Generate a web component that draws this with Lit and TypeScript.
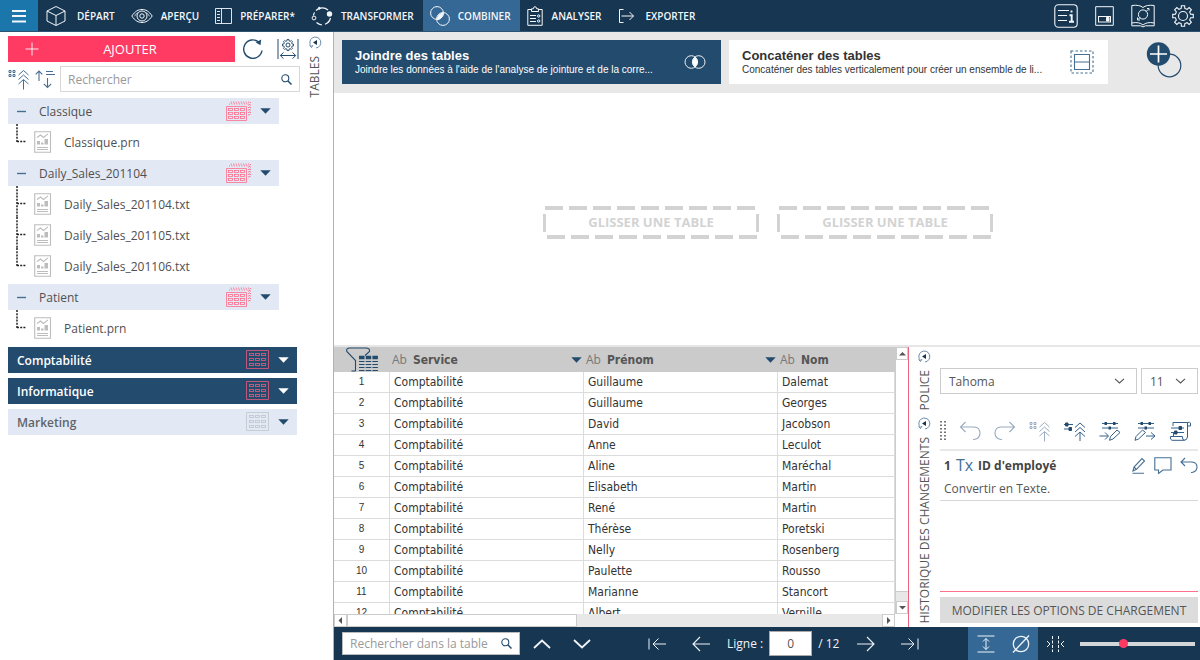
import { LitElement, html, css, svg } from "lit";
import { customElement, state } from "lit/decorators.js";
import { classMap } from "lit/directives/class-map.js";

/** Outline of a cog with n teeth around (c, c). */
function cog(c: number, outer: number, inner: number, n: number): string {
  const points: string[] = [];
  const step = (Math.PI * 2) / n;
  const at = (r: number, a: number) =>
    `${(c + r * Math.cos(a)).toFixed(2)} ${(c + r * Math.sin(a)).toFixed(2)}`;
  for (let i = 0; i < n; i++) {
    const a = i * step - Math.PI / 2;
    points.push(at(inner, a - step * 0.3), at(outer, a - step * 0.2), at(outer, a + step * 0.2), at(inner, a + step * 0.3));
  }
  return `M${points.join("L")}Z`;
}

const icon = (w: number, h: number, body: unknown, width = 1) => html`<svg
  class="icon" width=${w} height=${h} viewBox="0 0 ${w} ${h}" fill="none"
  stroke="currentColor" stroke-width=${width} aria-hidden="true">${body}</svg>`;

const icons = {
  menu: () => icon(14, 14, svg`<path d="M0 2h14M0 7h14M0 12.500h14"/>`, 1.8),
  cube: () => icon(24, 22, svg`<path d="M11 1.500L20 6V16L11 20.500L2 16V6ZM2 6L11 10.500L20 6M11 10.500V20.500"/>`),
  eye: () => icon(22, 16, svg`<path d="M.8 8C4 3.300 7.300 1.500 11 1.500S18 3.300 21.200 8C18 12.700 14.700 14.500 11 14.500S4 12.700 .8 8Z"/><circle cx="11" cy="8" r="5"/><circle cx="11" cy="8" r="2.200"/><path d="M3.500 8.300Q5 5.500 7 4.500M18.500 8.300Q17 5.500 15 4.500" stroke-width=".7"/>`),
  prepare: () => icon(17, 16, svg`<path d="M.5 .5H16.500V15.500H.5ZM6.500 .5V15.500M2 3.500H5M2 6.500H5M2 9.500H5M2 12.500H5" stroke-width=".9"/>`),
  transform: () => icon(22, 20, svg`<path d="M5 4.500A9 9 0 0 1 17 4M19.500 12A9 9 0 0 1 14 18.300M11 19A9 9 0 0 1 5.500 16.500M2.400 9.500A8 8 0 0 1 3.600 6.500" stroke-width="1.200"/><circle cx="18.500" cy="8" r="2.700" fill="currentColor" stroke="none"/><circle cx="3" cy="12" r="1.900"/><circle cx="8.300" cy="2.300" r="1" fill="currentColor"/>`),
  combine: () => icon(20, 20, svg`<path d="M7.400 13.500A6.400 6.400 0 0 1 13.200 7A6.400 6.400 0 0 1 7.400 13.500Z" fill="currentColor"/><circle cx="7" cy="7" r="6.400"/><circle cx="13" cy="13" r="6.400"/>`),
  analyse: () => icon(17, 20, svg`<path d="M4.500 3.500H.8V19.300H15.200V3.500H11.500M4.500 5.500V2.800H6.300Q6.500 .7 8 .7T9.700 2.800H11.500V5.500ZM3 9.500H9M3 12.500H9M3 15.500H9"/><circle cx="11.700" cy="10" r="1.200"/><circle cx="11.700" cy="15" r="1.200"/>`),
  exporter: () => icon(20, 16, svg`<path d="M6.500 1.500H2.500V14.500H6.500M4.500 8H16.500M12.500 4L16.500 8L12.500 12"/>`),
  info: () => icon(24, 24, svg`<rect x=".8" y=".8" width="22.400" height="22.400" rx="3.500"/><path d="M4 6.500H15M4 11.500H13M4 16.500H13"/><path d="M17.500 6.500V8.500M15.500 11.200H17.700V17.500M15 17.700H20" stroke-width="1.900"/>`, 1.1),
  windowed: () => icon(19, 20, svg`<path d="M.7 .7H18.300V19.300H.7Z"/><rect x="3.500" y="10.500" width="12" height="5.500"/><path d="M11.500 11.500H14V15H11.500Z" fill="currentColor"/>`),
  book: () => icon(24, 24, svg`<path d="M12 3.500Q8.500 .5 .8 1.500V19Q8 17.500 12 21Q16 17.500 23.200 19V1.500Q15.500 .5 12 3.500M.8 19V21.800H9.500Q12 24 14.500 21.800H23.200V19"/><circle cx="12" cy="10.500" r="4.600"/><path d="M7 15.500L9 13.500M17 5.500L15 7.500M16 4.500H18V6.500M6.500 13.500V16H9"/>`),
  gear: () => icon(22, 22, svg`<path d=${cog(11, 10.400, 7.800, 8)}/><circle cx="11" cy="11" r="4.500"/>`, 1.1),
  plus: () => icon(14, 14, svg`<path d="M7 .5V13.500M.5 7H13.500"/>`, 0.9),
  refresh: () => icon(22, 22, svg`<path d="M17 4.200A9.200 9.200 0 1 0 20 12.500" stroke-width="1.400"/><path d="M13.800 4.500L19.200 1.500L18.500 7.200Z" fill="currentColor" stroke="none"/>`),
  fit: () => icon(22, 22, svg`<path d="M1 1V21M21 1V21M3.500 17.500H18.500M6.500 14.500L3.300 17.500L6.500 20.700M15.500 14.500L18.700 17.500L15.500 20.700"/><g transform="translate(5 1)"><path d=${cog(6, 5.600, 4.300, 8)}/><circle cx="6" cy="6" r="2"/></g>`),
  collapse: () => icon(22, 22, svg`<path d="M1 2.500H3V4.500H1ZM5 2.500H7V4.500H5ZM1 6.500H3V8.500H1ZM5 6.500H7V8.500H5ZM10.500 7L15.500 2.500L20.500 7M10.500 11.500L15.500 7L20.500 11.500M10.500 16L15.500 11.500L20.500 16M15.500 12V21.500"/>`),
  order: () => icon(20, 20, svg`<path d="M4 2V12M.7 5.300L4 2L7.300 5.300M12.500 9V18.500M8.800 14.800L12.500 18.500L16.200 14.800M11 2.500H18M11 5.500H20"/>`, 1.1),
  search: () => icon(11, 11, svg`<circle cx="4.300" cy="4.300" r="3.500"/><path d="M7 7L10.500 10.500" stroke-width="1.500"/>`, 1.1),
  dock: () => icon(13, 13, svg`<path d="M2.500 10.500A5.500 5.500 0 1 1 7 12" stroke-width=".8"/><path d="M4 6.500L8 4V9Z" fill="#173651" stroke="none"/><path d="M.5 9.500L2.500 11.500L4 9" stroke-width=".8"/>`),
  triangle: () => icon(11, 6, svg`<path d="M.3 .3H10.700L5.500 5.800Z" fill="currentColor" stroke="none"/>`),
  minus: () => icon(9, 3, svg`<path d="M0 1.500H9"/>`, 1.4),
  tableStack: () => icon(25, 20, svg`<path d="M4.500 1H24.500V14M3 3H22.500V16M23.500 3V14M5 2H24" stroke-dasharray="1 1.500" stroke-width=".9"/><path d="M.5 5.500H20.500V19.500H.5Z"/>${[7.500, 11.500, 15.500].map((y) => [2.500, 8.500, 14.500].map((x) => svg`<rect x=${x} y=${y} width="4" height="2"/>`))}`, 0.8),
  table: () => icon(23, 20, svg`<path d="M.5 .5H22.500V18.500H.5Z"/>${[3.500, 8.500, 13.500].map((y) => [3.500, 9.500, 15.500].map((x) => svg`<rect x=${x} y=${y} width="4" height="2"/>`))}`, 0.9),
  file: () => icon(18, 22, svg`<path d="M.7 .7H16.500V21.300H.7Z"/><path d="M3 6.500L6.500 4L9.500 6.500L14 2.800M3 16.500H14M3 18.500H14"/><path d="M3 10H6V13.500H3ZM7 11.500H9.500V13.500H7ZM10.500 8H14V13.500H10.500Z" fill="currentColor" stroke="none"/>`, 1.1),
  branch: (last: boolean) => icon(10, 31, svg`<path d="M1 0V${last ? 18 : 31}M1 17.500H10" stroke-dasharray="2 1.200" stroke-width="1.500"/>`),
  join: () => icon(24, 14, svg`<path d="M12 2.300A6 6 0 0 1 12 11.700A6 6 0 0 1 12 2.300Z" fill="currentColor"/><circle cx="8.300" cy="7" r="6.300"/><circle cx="15.700" cy="7" r="6.300"/>`, 0.9),
  append: () => icon(24, 24, svg`<path d="M1 1H23V23H1Z" stroke-dasharray="2.500 2"/><path d="M4.500 4.500H19.500V19.500H4.500ZM4.500 12H19.500"/>`, 1.1),
  addJoin: () => icon(36, 36, svg`<circle cx="23.500" cy="23.500" r="11.300" stroke-width="1.200"/><circle cx="12.500" cy="12" r="11.700" fill="currentColor" stroke="none"/><path d="M12.500 3.500V20.500M4 12H21" stroke="#fff" stroke-width="1.700"/>`),
  filter: () => icon(33, 25, svg`<path d="M9.500 24V13.500L.8 4.500Q0 1 4 1H20Q24 1 23.500 4.500L19 8.500M9.500 24L5.500 24" stroke-width="1.100"/><path d="M13 10.500H32" stroke-width="3.500" stroke-dasharray="5.500 1.200"/><path d="M13 14.500H32M13 17.500H32M13 20.500H32M13 23.500H32" stroke-width="1.100" stroke-dasharray="5.500 1.200"/>`),
  chevron: () => icon(11, 6, svg`<path d="M1 .8L5.500 5L10 .8"/>`, 1.1),
  grip: () => icon(6, 20, svg`<path d="M1 0V20M5 0V20" stroke-width="1.500" stroke-dasharray="1.500 2"/>`),
  undo: () => icon(22, 20, svg`<path d="M6.500 1L1.500 6L6.500 11M1.500 6H15Q21 6.500 21 12T15 18.500H14"/>`, 1.1),
  redo: () => icon(22, 20, svg`<path d="M15.500 1L20.500 6L15.500 11M20.500 6H7Q1 6.500 1 12T7 18.500H8"/>`, 1.1),
  promote: () => icon(22, 20, svg`<path d="M0 3.500H9M0 8H8M11 6.500L16 2L21 6.500M11 11L16 6.500L21 11M11 15.500L16 11L21 15.500M16 11.500V20.500"/><path d="M1.500 2H4V5H1.500ZM5 6.500H7.500V9.500H5Z" fill="#234b6e" stroke="#234b6e"/>`),
  importStep: () => icon(22, 20, svg`<path d="M3 2.500H19M3 7H19M.5 15H9M6 11.500L9.500 15L6 18.500M10.500 19.300L11.500 15.500L18 9L21 11.500L14 18Z"/><path d="M5.500 1H8V4H5.500ZM14 1H16.500V4H14ZM9.500 5.500H12V8.500H9.500Z" fill="#234b6e" stroke="none"/>`),
  exportStep: () => icon(22, 20, svg`<path d="M4 2.500H20M4 7H20M12 15H21M17 11.500L21 15L17 18.500M1 19.300L2 15.500L8.500 9L11.500 11.500L4.500 18Z"/><path d="M6.500 1H9V4H6.500ZM14.500 1H17V4H14.500ZM10.500 5.500H13V8.500H10.500Z" fill="#234b6e" stroke="none"/>`),
  script: () => icon(22, 20, svg`<path d="M4 5V1.500H18.500V16Q18 19.300 15 19.300H3Q1 19 1.500 15.500H13.500Q13 19 15.500 19.300M18.500 5H21.500V2Q21 .8 18.500 1.500M2 7H15M2 11.500H15M4.500 12V15"/><path d="M10 5.500H12.500V8.500H10ZM5.500 10H8V13H5.500Z" fill="#234b6e" stroke="#234b6e"/>`),
  edit: () => icon(15, 17, svg`<path d="M2 14L3 10L11 1.500L13.500 4L5.500 12.300ZM3 10L5.500 12.300M1.500 16.300H13"/>`, 1.1),
  comment: () => icon(18, 17, svg`<path d="M.8 .8H17V13H9L4.500 16.500V13H.8Z"/>`, 1.1),
  revert: () => icon(18, 17, svg`<path d="M5 1L1 5L5 9M1 5H12Q17 5.500 17 10T12 15.500H11"/>`, 1.1),
  up: () => icon(18, 10, svg`<path d="M1 9L9 1.500L17 9"/>`, 1.8),
  down: () => icon(18, 10, svg`<path d="M1 1L9 8.500L17 1"/>`, 1.8),
  first: () => icon(18, 14, svg`<path d="M1 1.500V12.500M18 7H5M10.500 1.500L5 7L10.500 12.500"/>`),
  previous: () => icon(18, 16, svg`<path d="M18 8H1M8 1L1 8L8 15"/>`, 1.1),
  next: () => icon(18, 16, svg`<path d="M0 8H17M10 1L17 8L10 15"/>`, 1.1),
  last: () => icon(18, 14, svg`<path d="M17 1.500V12.500M0 7H13M7.500 1.500L13 7L7.500 12.500"/>`),
  rowHeight: () => icon(18, 18, svg`<path d="M.5 1H17.500M.5 17H17.500M9 3.500V14.500M6 6.500L9 3.500L12 6.500M6 11.500L9 14.500L12 11.500"/>`),
  empty: () => icon(18, 18, svg`<circle cx="9" cy="9" r="7.700"/><path d="M1 17.500L17 .5"/>`, 1.3),
  squeeze: () => icon(19, 16, svg`<path d="M6.500 0V16M12.500 0V16" stroke-dasharray="3 1.500"/><path d="M1 5L4 8L1 11M18 5L15 8L18 11"/>`),
};

const sections = [
  { name: "DÉPART", icon: icons.cube },
  { name: "APERÇU", icon: icons.eye },
  { name: "PRÉPARER*", icon: icons.prepare },
  { name: "TRANSFORMER", icon: icons.transform },
  { name: "COMBINER", icon: icons.combine },
  { name: "ANALYSER", icon: icons.analyse },
  { name: "EXPORTER", icon: icons.exporter },
];

const sources = [
  { name: "Classique", files: ["Classique.prn"] },
  { name: "Daily_Sales_201104", files: ["Daily_Sales_201104.txt", "Daily_Sales_201105.txt", "Daily_Sales_201106.txt"] },
  { name: "Patient", files: ["Patient.prn"] },
];

const tables = [
  { name: "Comptabilité", loaded: true },
  { name: "Informatique", loaded: true },
  { name: "Marketing", loaded: false },
];

const rows = [
  ["Guillaume", "Dalemat"], ["Guillaume", "Georges"], ["David", "Jacobson"], ["Anne", "Leculot"],
  ["Aline", "Maréchal"], ["Elisabeth", "Martin"], ["René", "Martin"], ["Thérèse", "Poretski"],
  ["Nelly", "Rosenberg"], ["Paulette", "Rousso"], ["Marianne", "Stancort"], ["Albert", "Vernille"],
];

const base = css`
  :host { display: block; box-sizing: border-box; }
  * { box-sizing: border-box; }
  button, input, select { font: inherit; color: inherit; margin: 0; }
  button { border: 0; padding: 0; background: none; display: flex; align-items: center; justify-content: center; cursor: pointer; }
  h2, p, ul { margin: 0; padding: 0; list-style: none; }
  .icon { display: block; flex: none; }
`;

@customElement("top-bar")
export class TopBar extends LitElement {
  @state() private active = "COMBINER";

  static styles = [base, css`
    .bar { display: flex; height: 32px; background: #173651; color: #f4f7fa; border-bottom: 1px solid #2c5372; }
    .burger { width: 38px; background: #1b76ac; }
    .nav { display: flex; flex: 1; }
    .section { gap: 8px; padding: 0 9px 0 7px; font-size: 10px; font-weight: 700; white-space: nowrap; }
    .section { font-weight: 600; }
    .active { background: #356895; }
    .tools { display: flex; align-items: center; gap: 17px; padding-right: 6px; }
  `];

  render() {
    return html`<header class="bar">
      <button class="burger" aria-label="Menu">${icons.menu()}</button>
      <nav class="nav">
        ${sections.map((s) => html`<button
          class=${classMap({ section: true, active: s.name === this.active })}
          @click=${() => (this.active = s.name)}>${s.icon()}${s.name}</button>`)}
      </nav>
      <div class="tools">
        <button aria-label="Informations">${icons.info()}</button>
        <button aria-label="Fenêtre">${icons.windowed()}</button>
        <button aria-label="Aide">${icons.book()}</button>
        <button aria-label="Paramètres">${icons.gear()}</button>
      </div>
    </header>`;
  }
}

@customElement("table-list")
export class TableList extends LitElement {
  static styles = [base, css`
    :host { display: flex; width: 334px; flex: none; border-right: 1px solid #fa8fa5; color: #505050; font-size: 12px; background: #fff; }
    .panel { width: 300px; padding: 4px 0 0 8px; }
    .actions { display: flex; align-items: center; gap: 7px; height: 26px; }
    .add { width: 227px; height: 26px; background: #ff3b64; color: #fff; font-size: 13px; justify-content: flex-start; padding-left: 17px; }
    .add-text { flex: 1; text-align: center; padding-right: 14px; }
    .actions .tool { width: 22px; color: #234b6e; }
    .actions .tool + .tool { margin-left: 6px; }
    .finder { display: flex; align-items: center; gap: 5px; margin-top: 4px; height: 26px; color: #466f93; }
    .field { display: flex; align-items: center; flex: 1; height: 26px; border: 1px solid #d8d8d8; padding: 0 7px; color: #234b6e; }
    .input { flex: 1; min-width: 0; border: 0; outline: 0; padding: 0; background: none; }
    .input::placeholder { color: #999; opacity: 1; }
    .tree { display: flex; flex-direction: column; gap: 5px; margin-top: 6px; width: 271px; font-weight: 500; }
    .group { display: flex; flex-direction: column; gap: 5px; }
    .row { display: flex; align-items: center; height: 26px; background: #e2e9f5; padding: 0 8px 0 9px; }
    .toggle { width: 22px; justify-content: flex-start; color: #466f93; }
    .name { flex: 1; }
    .badge { color: #ff6c8b; }
    .more { margin-left: 9px; color: #234b6e; }
    .files { display: flex; flex-direction: column; gap: 5px; }
    .file { display: flex; align-items: center; height: 26px; padding-left: 8px; }
    .branch { color: #222; height: 31px; margin-top: -5px; }
    .doc { color: #bdbdbd; margin: 0 12px 0 8px; }
    .tables { display: flex; flex-direction: column; gap: 5px; margin-top: 6px; width: 289px; font-weight: 600; }
    .loaded { background: #234b6e; color: #fff; }
    .loaded .badge { color: #d25a7c; }
    .loaded .more { color: #fff; }
    .idle .name { color: #606468; }
    .idle .badge { color: #c3c8d0; }
    .rail { flex: 1; display: flex; flex-direction: column; align-items: center; gap: 7px; padding: 4px 3px 0 0; color: #466f93; }
    .rail-title { writing-mode: vertical-rl; transform: rotate(180deg); color: #555; line-height: 16px; }
  `];

  render() {
    return html`
      <section class="panel">
        <div class="actions">
          <button class="add">${icons.plus()}<span class="add-text">AJOUTER</span></button>
          <button class="tool" aria-label="Actualiser">${icons.refresh()}</button>
          <button class="tool" aria-label="Ajuster">${icons.fit()}</button>
        </div>
        <div class="finder">
          <button aria-label="Tout réduire">${icons.collapse()}</button>
          <button aria-label="Trier">${icons.order()}</button>
          <label class="field"><input class="input" type="text" placeholder="Rechercher" aria-label="Rechercher" />${icons.search()}</label>
        </div>
        <ul class="tree">
          ${sources.map((g) => html`<li class="group">
            <div class="row">
              <button class="toggle" aria-label="Réduire">${icons.minus()}</button>
              <span class="name">${g.name}</span>
              <span class="badge">${icons.tableStack()}</span>
              <button class="more" aria-label="Options">${icons.triangle()}</button>
            </div>
            <ul class="files">
              ${g.files.map((f, i) => html`<li class="file">
                <span class="branch">${icons.branch(i === g.files.length - 1)}</span>
                <span class="doc">${icons.file()}</span>
                <span>${f}</span>
              </li>`)}
            </ul>
          </li>`)}
        </ul>
        <ul class="tables">
          ${tables.map((t) => html`<li class=${classMap({ row: true, loaded: t.loaded, idle: !t.loaded })}>
            <span class="name">${t.name}</span>
            <span class="badge">${icons.table()}</span>
            <button class="more" aria-label="Options">${icons.triangle()}</button>
          </li>`)}
        </ul>
      </section>
      <aside class="rail">
        <button aria-label="Ancrer">${icons.dock()}</button>
        <span class="rail-title">TABLES</span>
      </aside>`;
  }
}

@customElement("combine-area")
export class CombineArea extends LitElement {
  static styles = [base, css`
    :host { display: flex; flex-direction: column; flex: 1; min-height: 0; }
    .modes { display: flex; gap: 8px; height: 61px; padding: 8px 18px 8px 8px; background: #e8e8e8; }
    .mode { flex: 1; min-width: 0; height: 44px; padding: 0 14px 0 13px; gap: 12px; background: #fff; color: #333; text-align: left; font-family: "Liberation Sans", Arial, sans-serif; }
    .selected { background: #234b6e; color: #fff; }
    .texts { flex: 1; min-width: 0; display: flex; flex-direction: column; }
    .title { font-size: 13px; line-height: 15px; font-weight: 700; }
    .hint { font-size: 10px; line-height: 14px; white-space: nowrap; overflow: hidden; }
    .mode-icon { color: #466f93; }
    .selected .mode-icon { color: #fff; }
    .add { width: 36px; margin-left: 30px; height: 40px; color: #234b6e; }
    .canvas { flex: 1; display: flex; align-items: center; justify-content: center; gap: 18px; padding: 6px 0 0 2px; background: #fff; border-bottom: 2px solid #e6e6e6; }
    .slot {
      width: 216px; height: 33px; display: flex; align-items: center; justify-content: center;
      color: #d3d3d3; font-size: 13px; font-weight: 700;
      background:
        repeating-linear-gradient(90deg, #d3d3d3 0 18px, transparent 18px 24px) 2px 0 / 212px 4px no-repeat,
        repeating-linear-gradient(90deg, #d3d3d3 0 18px, transparent 18px 24px) 4px 100% / 210px 4px no-repeat,
        linear-gradient(#d3d3d3, #d3d3d3) 0 8px / 3px 18px no-repeat,
        linear-gradient(#d3d3d3, #d3d3d3) 100% 8px / 3px 18px no-repeat;
    }
  `];

  render() {
    return html`
      <div class="modes">
        <button class="mode selected">
          <span class="texts"><span class="title">Joindre des tables</span>
          <span class="hint">Joindre les données à l'aide de l'analyse de jointure et de la corre...</span></span>
          <span class="mode-icon">${icons.join()}</span>
        </button>
        <button class="mode">
          <span class="texts"><span class="title">Concaténer des tables</span>
          <span class="hint">Concaténer des tables verticalement pour créer un ensemble de li...</span></span>
          <span class="mode-icon">${icons.append()}</span>
        </button>
        <button class="add" aria-label="Ajouter une jointure">${icons.addJoin()}</button>
      </div>
      <div class="canvas">
        <div class="slot">GLISSER UNE TABLE</div>
        <div class="slot">GLISSER UNE TABLE</div>
      </div>`;
  }
}

@customElement("data-grid")
export class DataGrid extends LitElement {
  static styles = [base, css`
    :host { display: grid; grid-template: minmax(0, 1fr) 13px / minmax(0, 1fr) 13px; flex: 1; min-width: 0; height: 280px; border-right: 1px solid #e9657f; background: #e8e8e8; overflow: hidden; }
    .view { overflow: hidden; background: #fff; }
    .grid { width: 100%; table-layout: fixed; border-collapse: separate; border-spacing: 0; color: #333; font-family: "DejaVu Sans Condensed", "Noto Sans", sans-serif; font-size: 12px; }
    .col-index { width: 56px; }
    .col-text { width: 194px; }
    .head { height: 25px; padding: 0; background: #cbcbcb; color: #555; text-align: left; }
    .head-row { display: flex; align-items: center; gap: 6px; padding: 0 2px; }
    .type { font-family: "Open Sans", sans-serif; font-weight: 400; color: #777; font-size: 12px; }
    .sort { margin-left: auto; color: #234b6e; }
    .filter { margin: 0 auto; color: #234b6e; }
    .cell { height: 21px; padding: 0 4px; line-height: 20px; border-bottom: 1px solid #dcdcdc; border-right: 1px solid #dcdcdc; }
    .index { font-family: "Liberation Sans", Arial, sans-serif; font-size: 10px; font-weight: 400; text-align: center; }
    .vbar, .hbar { display: flex; background: #e8e8e8; }
    .vbar { flex-direction: column; border-left: 1px solid #ccc; }
    .knob { flex: none; width: 13px; height: 13px; background: #fff; border: 1px solid #ccc; color: #555; }
    .vbar .knob { width: 12px; }
    .vthumb { flex: 1; margin-bottom: 9px; background: #fff; border-bottom: 1px solid #ccc; }
    .hthumb { width: 41%; background: #fff; border: 1px solid #ccc; }
    .fill { flex: 1; }
    .corner { background: #fff; }
  `];

  private arrow(d: string) {
    return icon(7, 7, svg`<path d=${d} fill="currentColor" stroke="none"/>`);
  }

  private heading(name: string, sort: boolean) {
    return html`<th class="head" scope="col"><div class="head-row">
      <span class="type">Ab</span><span>${name}</span>
      ${sort ? html`<button class="sort" aria-label="Trier">${icons.triangle()}</button>` : ""}
    </div></th>`;
  }

  render() {
    return html`
      <div class="view"><table class="grid">
        <colgroup><col class="col-index" /><col class="col-text" /><col class="col-text" /><col /></colgroup>
        <thead><tr>
          <th class="head"><button class="filter" aria-label="Filtrer">${icons.filter()}</button></th>
          ${this.heading("Service", true)}${this.heading("Prénom", true)}${this.heading("Nom", false)}
        </tr></thead>
        <tbody>${rows.map(([first, last], i) => html`<tr>
          <th class="cell index" scope="row">${i + 1}</th>
          <td class="cell">Comptabilité</td><td class="cell">${first}</td><td class="cell">${last}</td>
        </tr>`)}</tbody>
      </table></div>
      <div class="vbar">
        <button class="knob" aria-label="Monter">${this.arrow("M0 5.500L3.500 2L7 5.500Z")}</button>
        <div class="vthumb"></div>
        <button class="knob" aria-label="Descendre">${this.arrow("M0 2L3.500 5.500L7 2Z")}</button>
      </div>
      <div class="hbar">
        <button class="knob" aria-label="Gauche">${this.arrow("M5 0L1.500 3.500L5 7Z")}</button>
        <div class="hthumb"></div><div class="fill"></div>
        <button class="knob" aria-label="Droite">${this.arrow("M2 0L5.500 3.500L2 7Z")}</button>
      </div>
      <div class="corner"></div>`;
  }
}

@customElement("history-panel")
export class HistoryPanel extends LitElement {
  static styles = [base, css`
    :host { display: flex; width: 291px; flex: none; background: #fff; color: #555; font-size: 12px; }
    .rail { width: 31px; display: flex; flex-direction: column; align-items: center; padding-top: 3px; gap: 7px; color: #466f93; }
    .rail-title { writing-mode: vertical-rl; transform: rotate(180deg); color: #555; line-height: 16px; white-space: nowrap; }
    .body { flex: 1; min-width: 0; display: flex; flex-direction: column; padding: 21px 2px 4px 0; }
    .fonts { display: flex; gap: 4px; height: 26px; }
    .choice { display: grid; border: 1px solid #ccc; align-items: center; color: #555; }
    .family { flex: 1; }
    .size { width: 57px; }
    .select { grid-area: 1 / 1; appearance: none; width: 100%; height: 24px; border: 0; outline: 0; background: none; padding: 0 8px; }
    .mark { grid-area: 1 / 1; justify-self: end; margin-right: 11px; pointer-events: none; }
    .toolbar { display: flex; align-items: center; justify-content: space-between; margin-top: 26px; height: 22px; padding-right: 7px; color: #35608a; }
    .off { color: #98abc0; }
    .grip { color: #444; }
    .entry { margin-top: 7px; border-top: 2px solid #e8e8e8; border-bottom: 1px solid #d8d8d8; height: 52px; padding: 4px 0 0 4px; }
    .entry-head { display: flex; align-items: center; gap: 5px; height: 20px; font-weight: 700; color: #444; }
    .kind { font-size: 16px; font-weight: 400; color: #466f93; line-height: 20px; }
    .tools { display: flex; gap: 8px; margin-left: auto; color: #466f93; }
    .detail { line-height: 16px; margin-top: 6px; }
    .spacer { flex: 1; border-bottom: 1px solid #ff6f8c; }
    .modify { margin-top: 5px; height: 26px; background: #dcdcdc; white-space: nowrap; }
  `];

  render() {
    return html`
      <aside class="rail">
        <button aria-label="Ancrer">${icons.dock()}</button>
        <span class="rail-title">POLICE</span>
        <button aria-label="Ancrer">${icons.dock()}</button>
        <span class="rail-title">HISTORIQUE DES CHANGEMENTS</span>
      </aside>
      <section class="body">
        <div class="fonts">
          <div class="choice family"><select class="select" aria-label="Police"><option>Tahoma</option></select><span class="mark">${icons.chevron()}</span></div>
          <div class="choice size"><select class="select" aria-label="Taille"><option>11</option></select><span class="mark">${icons.chevron()}</span></div>
        </div>
        <div class="toolbar">
          <span class="grip">${icons.grip()}</span>
          <button class="off" aria-label="Annuler">${icons.undo()}</button>
          <button class="off" aria-label="Rétablir">${icons.redo()}</button>
          <button class="off" aria-label="Réduire">${icons.collapse()}</button>
          <button aria-label="Remonter">${icons.promote()}</button>
          <button aria-label="Importer les étapes">${icons.importStep()}</button>
          <button aria-label="Exporter les étapes">${icons.exportStep()}</button>
          <button aria-label="Script">${icons.script()}</button>
        </div>
        <div class="entry">
          <div class="entry-head"><span>1</span><span class="kind">Tx</span><span>ID d'employé</span>
            <div class="tools">
              <button aria-label="Modifier">${icons.edit()}</button>
              <button aria-label="Commenter">${icons.comment()}</button>
              <button aria-label="Annuler ce changement">${icons.revert()}</button>
            </div>
          </div>
          <p class="detail">Convertir en Texte.</p>
        </div>
        <div class="spacer"></div>
        <button class="modify">MODIFIER LES OPTIONS DE CHARGEMENT</button>
      </section>`;
  }
}

@customElement("status-bar")
export class StatusBar extends LitElement {
  static styles = [base, css`
    :host { display: block; flex: none; }
    .bar { display: flex; align-items: center; height: 33px; padding: 0 5px 0 8px; background: #173651; color: #f0f4f8; font-size: 12px; }
    .field { display: flex; align-items: center; width: 178px; height: 23px; margin-right: 2px; background: #fff; border: 1px solid #bbb; padding: 0 7px; color: #234b6e; }
    .input { flex: 1; min-width: 0; border: 0; outline: 0; padding: 0; background: none; }
    .input::placeholder { color: #999; opacity: 1; }
    .find { width: 40px; height: 33px; }
    .pager { display: flex; align-items: center; margin-left: 33px; }
    .step { width: 44px; height: 33px; }
    .line { display: flex; align-items: center; gap: 6px; padding: 0 5px 0 4px; white-space: nowrap; }
    .number { width: 43px; height: 25px; border: 1px solid #aaa; background: #fff; color: #555; text-align: center; padding: 0; }
    .toggles { display: flex; margin-left: auto; background: #356895; }
    .toggle { width: 35px; height: 33px; }
    .slider { width: 115px; height: 12px; margin: 0 0 0 7px; appearance: none; background: none; }
    .slider::-webkit-slider-runnable-track { height: 4px; background: #d3d7da; }
    .slider::-webkit-slider-thumb { appearance: none; width: 9px; height: 9px; margin-top: -3px; border-radius: 50%; background: #ff3b64; }
  `];

  render() {
    return html`<footer class="bar">
      <label class="field"><input class="input" type="text" placeholder="Rechercher dans la table" aria-label="Rechercher dans la table" />${icons.search()}</label>
      <button class="find" aria-label="Résultat précédent">${icons.up()}</button>
      <button class="find" aria-label="Résultat suivant">${icons.down()}</button>
      <div class="pager">
        <button class="step" aria-label="Première ligne">${icons.first()}</button>
        <button class="step" aria-label="Ligne précédente">${icons.previous()}</button>
        <label class="line">Ligne : <input class="number" type="text" value="0" /><span>/ 12</span></label>
        <button class="step" aria-label="Ligne suivante">${icons.next()}</button>
        <button class="step" aria-label="Dernière ligne">${icons.last()}</button>
      </div>
      <div class="toggles">
        <button class="toggle" aria-label="Hauteur des lignes">${icons.rowHeight()}</button>
        <button class="toggle" aria-label="Valeurs vides">${icons.empty()}</button>
      </div>
      <button class="toggle" aria-label="Ajuster les colonnes">${icons.squeeze()}</button>
      <input class="slider" type="range" min="0" max="100" value="37" aria-label="Zoom" />
    </footer>`;
  }
}

@customElement("app-root")
export class AppRoot extends LitElement {
  static styles = [base, css`
    :host { display: flex; flex-direction: column; height: 100vh; font-family: "Open Sans", "Noto Sans", sans-serif; overflow: hidden; background: #fff; }
    .main { display: flex; flex: 1; min-height: 0; }
    .work { display: flex; flex-direction: column; flex: 1; min-width: 0; }
    .lower { display: flex; flex: none; }
  `];

  render() {
    return html`
      <top-bar></top-bar>
      <div class="main">
        <table-list></table-list>
        <main class="work">
          <combine-area></combine-area>
          <div class="lower"><data-grid></data-grid><history-panel></history-panel></div>
          <status-bar></status-bar>
        </main>
      </div>`;
  }
}
